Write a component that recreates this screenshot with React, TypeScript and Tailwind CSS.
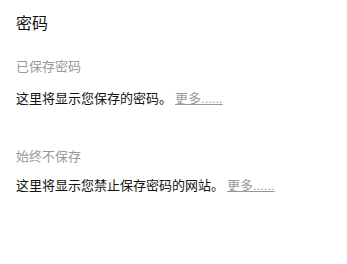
export default function App() {
  return (
    <div
      className="min-h-[264px] w-[347px] bg-white pl-4 pt-[12px] text-[#111]"
      style={{ fontFamily: '"Liberation Sans", "Noto Sans CJK SC", sans-serif' }}
    >
      <h1 className="text-[16px] font-normal leading-6">密码</h1>
      <section className="mt-[23px]">
        <h3 className="text-[13px] leading-4 text-[#999]">已保存密码</h3>
        <p className="mt-[16px] text-[13px] leading-4">
          这里将显示您保存的密码。
          <a href="#" className="ml-[3px] text-[#999] underline">
            更多......
          </a>
        </p>
      </section>
      <section className="mt-[42px]">
        <h3 className="text-[13px] leading-4 text-[#999]">始终不保存</h3>
        <p className="mt-[13px] text-[13px] leading-4">
          这里将显示您禁止保存密码的网站。
          <a href="#" className="ml-[3px] text-[#999] underline">
            更多......
          </a>
        </p>
      </section>
    </div>
  );
}
